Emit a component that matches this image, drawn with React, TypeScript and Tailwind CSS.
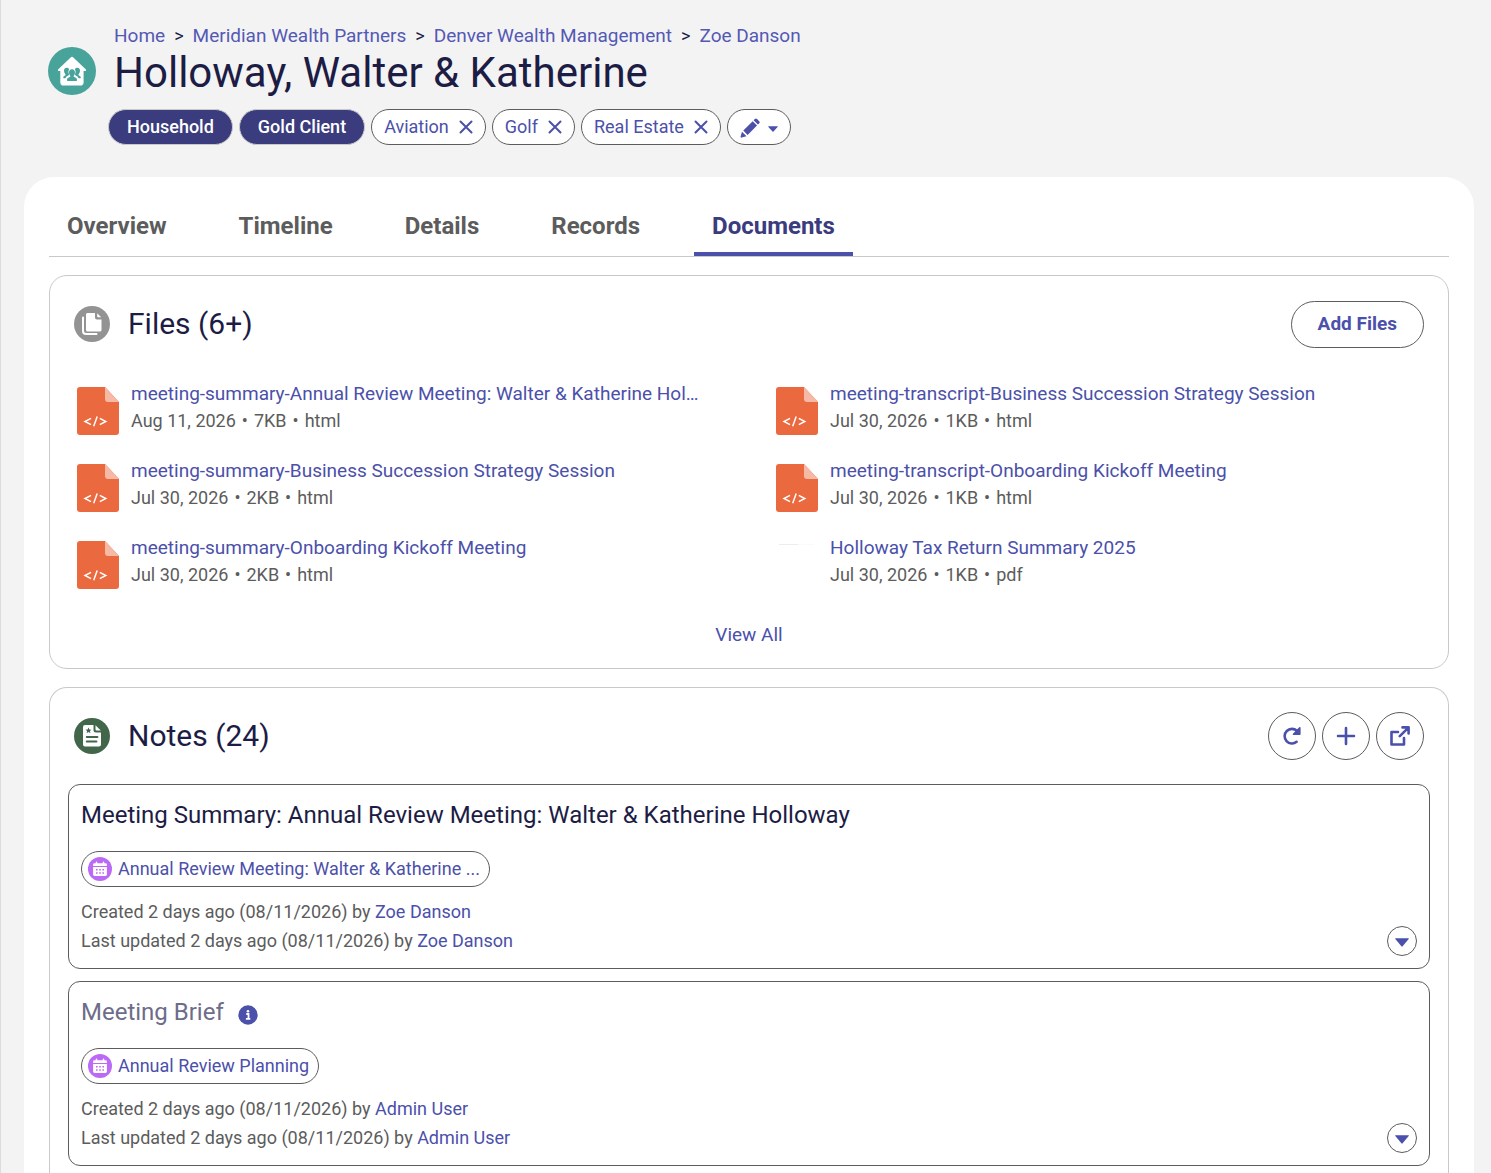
import type { ReactNode } from 'react';

const crumbs = ['Home', 'Meridian Wealth Partners', 'Denver Wealth Management', 'Zoe Danson'];

const tabs = ['Overview', 'Timeline', 'Details', 'Records', 'Documents'];

const files = [
  { name: 'meeting-summary-Annual Review Meeting: Walter & Katherine Hol…', date: 'Aug 11, 2026', size: '7KB', type: 'html' },
  { name: 'meeting-transcript-Business Succession Strategy Session', date: 'Jul 30, 2026', size: '1KB', type: 'html' },
  { name: 'meeting-summary-Business Succession Strategy Session', date: 'Jul 30, 2026', size: '2KB', type: 'html' },
  { name: 'meeting-transcript-Onboarding Kickoff Meeting', date: 'Jul 30, 2026', size: '1KB', type: 'html' },
  { name: 'meeting-summary-Onboarding Kickoff Meeting', date: 'Jul 30, 2026', size: '2KB', type: 'html' },
  { name: 'Holloway Tax Return Summary 2025', date: 'Jul 30, 2026', size: '1KB', type: 'pdf' },
];

const notes = [
  {
    title: 'Meeting Summary: Annual Review Meeting: Walter & Katherine Holloway',
    event: 'Annual Review Meeting: Walter & Katherine ...',
    user: 'Zoe Danson',
    muted: false,
  },
  { title: 'Meeting Brief', event: 'Annual Review Planning', user: 'Admin User', muted: true },
];

const HouseholdIcon = () => (
  <svg viewBox="0 0 48 48" className="size-12 shrink-0" aria-hidden="true">
    <circle cx="24" cy="24" r="24" fill="#48a39a" />
    <path
      d="M22.9 10.2a1.6 1.6 0 0 1 2.2 0l12.6 12c.8.8.3 1.9-.7 1.9h-1.4v11.3c0 2-1.2 3.2-3.2 3.2H15.5c-2 0-3.2-1.2-3.2-3.2V24.1H11c-1 0-1.5-1.1-.7-1.9z"
      fill="#fff"
    />
    <g fill="#48a39a">
      <path d="M18.7 20.7c1.3 0 2.2.7 2.4 1.7-.9 1.3-.9 3.1-.1 4.7.2.5.1.9-.4 1.2l-1.6 1c-.8.5-1.3 1.1-1.5 1.9h-1.7c-.5 0-.8-.4-.6-.9.3-1 1-1.5 1.9-1.9.5-.3.5-.8.1-1.3-.8-1-1.2-2.1-1.2-3.4 0-1.8 1-3 2.7-3z" />
      <path d="M29.3 20.7c-1.3 0-2.2.7-2.4 1.7.9 1.3.9 3.1.1 4.7-.2.5-.1.9.4 1.2l1.6 1c.8.5 1.3 1.1 1.5 1.9h1.7c.5 0 .8-.4.6-.9-.3-1-1-1.5-1.9-1.9-.5-.3-.5-.8-.1-1.3.8-1 1.2-2.1 1.2-3.4 0-1.8-1-3-2.7-3z" />
      <path d="M24 22.3c1.9 0 3 1.3 3 3.2 0 1.3-.4 2.3-1.1 3.1-.4.5-.3 1.1.3 1.4 1.4.7 2.7 1.2 2.9 2.9 0 .7-.4 1.1-1.1 1.1h-8c-.7 0-1.1-.4-1.1-1.1.2-1.7 1.5-2.2 2.9-2.9.6-.3.7-.9.3-1.4-.7-.8-1.1-1.8-1.1-3.1 0-1.900 1.100-3.200 3-3.200z" />
    </g>
  </svg>
);

const FilesIcon = () => (
  <svg viewBox="0 0 36 36" className="size-9 shrink-0" aria-hidden="true">
    <circle cx="18" cy="18" r="18" fill="#939393" />
    <path d="M9 11.5V25a3 3 0 0 0 3 3h10.5" fill="none" stroke="#fff" strokeWidth="2" strokeLinecap="round" />
    <path d="M13.5 7H21v4.500a2 2 0 0 0 2 2h4.500V24a1.500 1.500 0 0 1-1.500 1.500H13.500A1.500 1.500 0 0 1 12 24V8.500A1.500 1.500 0 0 1 13.500 7z" fill="#fff" />
    <path d="M23.2 7.3l4 4h-3.200a.8.8 0 0 1-.8-.8z" fill="#fff" />
  </svg>
);

const NotesIcon = () => (
  <svg viewBox="0 0 36 36" className="size-9 shrink-0" aria-hidden="true">
    <circle cx="18" cy="18" r="18" fill="#41664a" />
    <path d="M11 7h8.5v5a2.500 2.500 0 0 0 2.500 2.500h5V26.500a2 2 0 0 1-2 2H11a2 2 0 0 1-2-2V9a2 2 0 0 1 2-2z" fill="#fff" />
    <path d="M21.5 7.3l5.300 5.200h-4.300a1 1 0 0 1-1-1z" fill="#fff" />
    <path d="M14.5 9.5l.9 2 2.100.2-1.600 1.400.5 2.100-1.900-1.100-1.900 1.100.5-2.100-1.600-1.400 2.100-.2z" fill="#41664a" />
    <path d="M12.7 19h10.8M12.7 23.5h9.8" stroke="#41664a" strokeWidth="1.8" strokeLinecap="round" />
  </svg>
);

const EventIcon = () => (
  <svg viewBox="0 0 24 24" className="size-6 shrink-0" aria-hidden="true">
    <circle cx="12" cy="12" r="12" fill="#bc6af5" />
    <path d="M8.5 5.3v2M15.5 5.3v2" stroke="#fff" strokeWidth="1.5" strokeLinecap="round" />
    <path d="M6.5 6.2h11a1.4 1.4 0 0 1 1.4 1.4v1.5H5.1V7.6a1.4 1.4 0 0 1 1.4-1.4z" fill="#fff" />
    <path d="M5.1 10.1h13.8v7.4a1.4 1.4 0 0 1-1.4 1.4h-11a1.4 1.4 0 0 1-1.4-1.4z" fill="#fff" />
    <path d="M8 12.8h1.6M11.2 12.8h1.6M14.4 12.8H16M8 16h1.6M11.2 16h1.6M14.4 16H16" stroke="#bc6af5" strokeWidth="1.6" />
  </svg>
);

const HtmlFileIcon = () => (
  <svg viewBox="0 0 42 48" className="h-12 w-[42px] shrink-0" aria-hidden="true">
    <path d="M3 0h25l14 15v30a3 3 0 0 1-3 3H3a3 3 0 0 1-3-3V3a3 3 0 0 1 3-3z" fill="#eb693e" />
    <path d="M28 0l14 15H31a3 3 0 0 1-3-3z" fill="#f5b9a5" />
    <path d="M14 31.4l-6 3.1 6 3.1M22.8 31.4l6 3.1-6 3.1M20.2 29.6l-3.5 9.6" fill="none" stroke="#fff" strokeWidth="1.5" />
  </svg>
);

// The pdf preview never loads, only the top edge of its placeholder shows
const PdfFileIcon = () => (
  <svg viewBox="0 0 42 48" className="h-12 w-[42px] shrink-0" aria-hidden="true">
    <path d="M3 3.5h19" stroke="#ededed" strokeWidth="1" />
    <path d="M22 3.5h16" stroke="#fafafa" strokeWidth="1" />
  </svg>
);

const CloseIcon = () => (
  <svg viewBox="0 0 14 14" className="size-[14px]" aria-hidden="true">
    <path d="M1.5 1.5l11 11M12.5 1.5l-11 11" stroke="currentColor" strokeWidth="2" strokeLinecap="round" />
  </svg>
);

const IconButton = ({ label, children }: { label: string; children: ReactNode }) => (
  <button
    type="button"
    aria-label={label}
    className="flex size-12 items-center justify-center rounded-full border border-[#5c5c5c] bg-white text-[#4b50aa]"
  >
    {children}
  </button>
);

const Header = () => (
  <header className="flex gap-3 pt-6 pl-[47px]">
    <div className="pt-[23px]">
      <HouseholdIcon />
    </div>
    <div>
      <nav aria-label="Breadcrumb" className="flex gap-[9px] pl-[6px] text-[19px] leading-6">
        {crumbs.map((crumb, i) => (
          <span key={crumb} className="flex gap-[9px]">
            {i > 0 && <span className="text-lg leading-6">&gt;</span>}
            <a href="#" className="text-[#5459b4]">
              {crumb}
            </a>
          </span>
        ))}
      </nav>
      <h1 className="pl-[6px] text-[42px] leading-[50px]">Holloway, Walter &amp; Katherine</h1>
      <div className="mt-[11px] flex gap-[6px] text-lg">
        {['Household', 'Gold Client'].map((tag) => (
          <span
            key={tag}
            className="flex h-9 items-center rounded-full border border-[#c9c9c9] bg-[#3a3c7d] px-[18px] font-medium text-white"
          >
            {tag}
          </span>
        ))}
        {['Aviation', 'Golf', 'Real Estate'].map((tag) => (
          <span
            key={tag}
            className="flex h-9 items-center gap-[10px] rounded-full border border-[#5c5c5c] bg-white px-3 text-[#4b50aa]"
          >
            {tag}
            <button type="button" aria-label={`Remove ${tag}`}>
              <CloseIcon />
            </button>
          </span>
        ))}
        <button
          type="button"
          aria-label="Edit tags"
          className="flex h-9 items-center gap-2 rounded-full border border-[#5c5c5c] bg-white px-3 text-[#4b50aa]"
        >
          <svg viewBox="0 0 20 20" className="mt-[2px] size-5" fill="currentColor" aria-hidden="true">
            <path d="M14.9 1a1.5 1.5 0 0 1 2.1 0l2.2 2.200a1.500 1.500 0 0 1 0 2.100l-1.300 1.300-4.300-4.300z" />
            <path d="M12.7 3.2l4.3 4.3L7.6 16.9l-4.3-4.3z" />
            <path d="M2 13.7l4.5 4.5-4.9 1.4a.8.8 0 0 1-1-1z" />
          </svg>
          <svg viewBox="0 0 10 6" className="mt-[3px] h-[6px] w-[10px]" fill="currentColor" aria-hidden="true">
            <path d="M.8.3h8.4c.6 0 .8.4.4.8L5.5 5.4a.7.7 0 0 1-1 0L.4 1.1C0 .7.2.3.8.3z" />
          </svg>
        </button>
      </div>
    </div>
  </header>
);

const FilesCard = () => (
  <section className="mt-[18px] rounded-[18px] border border-[#c9c9c9] px-6 pt-[25px] pb-[19px]">
    <div className="flex items-start justify-between">
      <div className="flex items-center gap-[18px] pt-[5px]">
        <FilesIcon />
        <h2 className="text-3xl leading-[34px]">Files (6+)</h2>
      </div>
      <button
        type="button"
        className="h-[47px] rounded-full border border-[#5c5c5c] px-[26px] text-[19px] font-bold text-[#4b50aa]"
      >
        Add Files
      </button>
    </div>
    <ul className="mt-8 grid grid-cols-2 gap-x-[70px] gap-y-[22px] pr-[19px] pl-[3px]">
      {files.map((file) => (
        <li key={file.name} className="flex min-w-0 gap-3">
          <div className="pt-[7px]">{file.type === 'html' ? <HtmlFileIcon /> : <PdfFileIcon />}</div>
          <div className="min-w-0">
            <a href="#" className="block truncate text-[19px] leading-[27px] text-[#4b50aa]">
              {file.name}
            </a>
            <p className="flex gap-[6px] text-lg leading-[27px] text-[#5c5c5c]">
              <span>{file.date}</span>
              <span>•</span>
              <span>{file.size}</span>
              <span>•</span>
              <span>{file.type}</span>
            </p>
          </div>
        </li>
      ))}
    </ul>
    <div className="mt-8 text-center">
      <a href="#" className="text-[19px] leading-7 text-[#4b50aa]">
        View All
      </a>
    </div>
  </section>
);

const NotesCard = () => (
  <section className="mt-[18px] flex-1 rounded-t-[18px] border border-b-0 border-[#c9c9c9] px-[18px] pt-6">
    <div className="flex items-center justify-between px-[6px]">
      <div className="flex items-center gap-[18px]">
        <NotesIcon />
        <h2 className="text-3xl leading-[34px]">Notes (24)</h2>
      </div>
      <div className="flex gap-[6px]">
        <IconButton label="Refresh">
          <svg viewBox="0 0 20 20" className="size-5" aria-hidden="true">
            <path d="M14.6 15.8A7.3 7.3 0 1 1 14.9 4.8" fill="none" stroke="currentColor" strokeWidth="2.6" strokeLinecap="round" />
            <path d="M17.8 1.8v6.5H11.5z" fill="currentColor" stroke="currentColor" strokeWidth="1.6" strokeLinejoin="round" />
          </svg>
        </IconButton>
        <IconButton label="New note">
          <svg viewBox="0 0 20 20" className="size-5" fill="none" stroke="currentColor" aria-hidden="true">
            <path d="M10 2v16M2 10h16" strokeWidth="2.6" strokeLinecap="round" />
          </svg>
        </IconButton>
        <IconButton label="Open notes">
          <svg viewBox="0 0 20 20" className="size-5" fill="none" stroke="currentColor" strokeLinecap="round" strokeLinejoin="round" aria-hidden="true">
            <path d="M8 6H1.500v12.500H14V12" strokeWidth="2.6" />
            <path d="M12.5 1.4h6.1v6.1M18.2 1.8l-8.4 8.4" strokeWidth="2.6" />
          </svg>
        </IconButton>
      </div>
    </div>
    <div className="mt-6 flex flex-col gap-3">
      {notes.map((note) => (
        <article
          key={note.title}
          className="flex items-end justify-between rounded-xl border border-[#5c5c5c] p-3 pt-[14px]"
        >
          <div>
            <h3 className={note.muted ? 'flex items-center gap-[14px] text-2xl text-[#6d6d8a]' : 'text-2xl'}>
              {note.title}
              {note.muted && (
                <svg viewBox="0 0 20 20" className="mt-[6px] size-5" aria-hidden="true">
                  <circle cx="10" cy="10" r="9.7" fill="#4b50aa" />
                  <circle cx="10" cy="6.3" r="1.3" fill="#fff" />
                  <path d="M8.3 9h2.2v4.6M7.9 13.9h4.4" fill="none" stroke="#fff" strokeWidth="1.8" />
                </svg>
              )}
            </h3>
            <a
              href="#"
              className="mt-5 inline-flex h-9 items-center gap-[6px] rounded-full border border-[#5c5c5c] pr-[9px] pl-[6px] text-lg text-[#4b50aa]"
            >
              <EventIcon />
              {note.event}
            </a>
            <div className="mt-[9px] pb-px text-lg leading-[29px] text-[#5c5c5c]">
              <p>
                Created 2 days ago (08/11/2026) by <a href="#" className="text-[#4b50aa]">{note.user}</a>
              </p>
              <p>
                Last updated 2 days ago (08/11/2026) by <a href="#" className="text-[#4b50aa]">{note.user}</a>
              </p>
            </div>
          </div>
          <button
            type="button"
            aria-label="Note actions"
            className="flex size-[30px] items-center justify-center rounded-full border border-[#5c5c5c] text-[#4b50aa]"
          >
            <svg viewBox="0 0 14 9" className="mt-[2px] h-[9px] w-[14px]" fill="currentColor" aria-hidden="true">
              <path d="M.7.3h12.6c.5 0 .7.4.4.8L7.6 8.3a.8.8 0 0 1-1.2 0L.3 1.1C0 .7.2.3.7.3z" />
            </svg>
          </button>
        </article>
      ))}
    </div>
  </section>
);

export default function App() {
  return (
    <div className="flex h-screen flex-col overflow-hidden border-l border-[#dcdcdc] bg-[#f3f3f3] font-['Roboto',sans-serif] text-[#1c1c45]">
      <Header />
      <main className="mt-8 mr-[17px] ml-[23px] flex flex-1 flex-col rounded-t-[30px] bg-white px-[25px] pt-[25px]">
        <nav aria-label="Record sections" className="flex gap-9 border-b border-[#c9c9c9]">
          {tabs.map((tab) => (
            <a
              key={tab}
              href="#"
              className={
                tab === 'Documents'
                  ? 'border-b-4 border-[#4b50aa] px-[18px] pt-2 pb-[10px] text-2xl font-bold text-[#3a3c7d]'
                  : 'border-b-4 border-transparent px-[18px] pt-2 pb-[10px] text-2xl font-bold text-[#5c5c5c]'
              }
            >
              {tab}
            </a>
          ))}
        </nav>
        <FilesCard />
        <NotesCard />
      </main>
    </div>
  );
}
